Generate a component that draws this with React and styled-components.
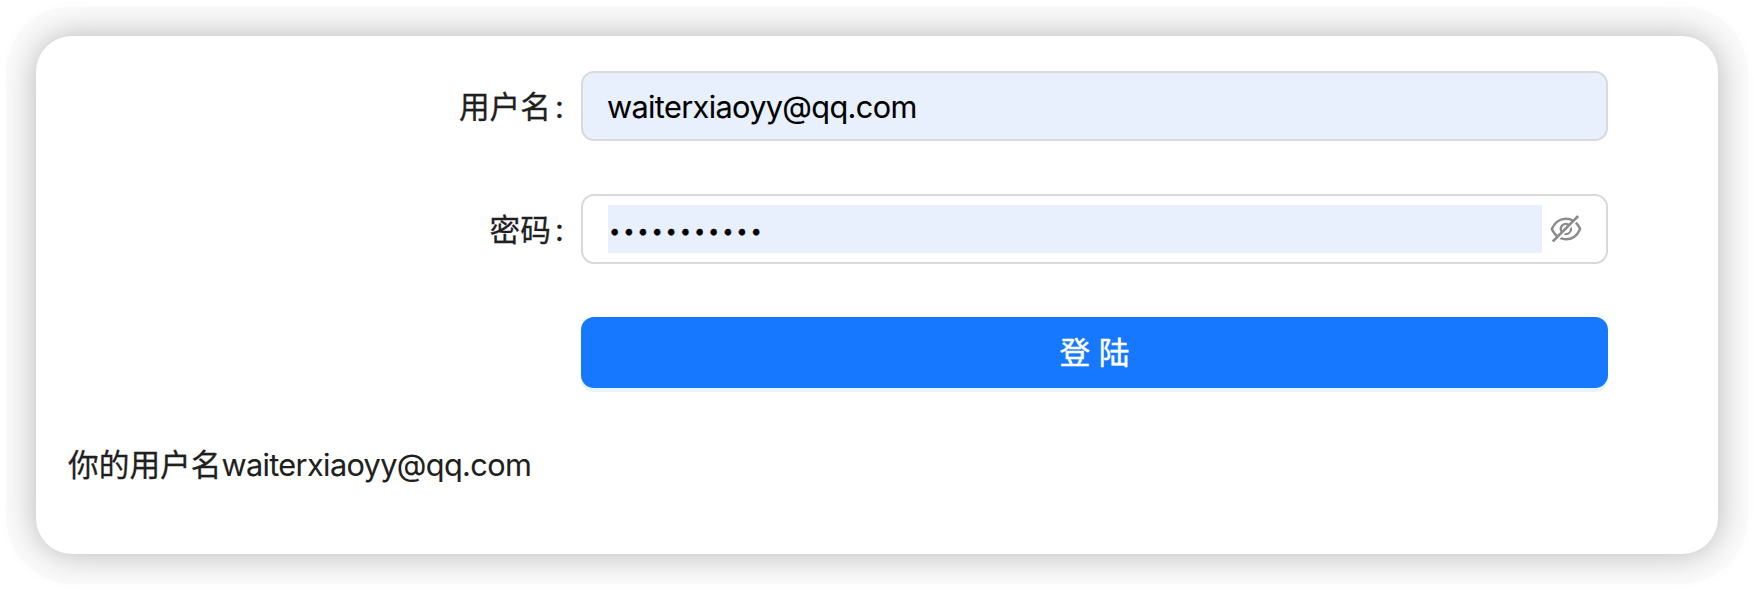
import React from "react";
import styled, { createGlobalStyle } from "styled-components";
import { AiOutlineEyeInvisible } from "react-icons/ai";

const GlobalStyle = createGlobalStyle`
  * { box-sizing: border-box; }
  body {
    margin: 0;
    background: #fff;
    color: #1f1f1f;
    font-family: Inter, "Noto Sans CJK SC", sans-serif;
    font-size: 30.7px;
    line-height: 48px;
    -webkit-text-stroke: 0.3px currentColor;
  }
`;

const Page = styled.main`
  padding: 36px;
  height: 590px;
`;

const Card = styled.section`
  height: 518px;
  padding: 35px 32px;
  border-radius: 36px;
  background: #fff;
  box-shadow: 0 0 34px rgba(0, 0, 0, 0.28), 0 0 0 30px rgba(0, 0, 0, 0.016);
`;

const Form = styled.form`
  display: flex;
  flex-direction: column;
  gap: 53px;
  padding-right: 78px;
`;

const Row = styled.div`
  display: grid;
  grid-template-columns: 513px 1fr;
  align-items: center;
`;

const Label = styled.label`
  display: flex;
  justify-content: flex-end;
  padding: 1px 18px 0 0;
`;

const Colon = styled.span`
  width: 8px;
  margin-left: 4px;
  text-align: center;
`;

const Field = styled.div`
  display: flex;
  align-items: center;
  height: 70px;
  padding: ${(p) => (p.$filled ? "1px 24px 0" : "0 22px 0 25px")};
  border: 2px solid #d9d9d9;
  border-radius: 13px;
  background: ${(p) => (p.$filled ? "#e8f0fe" : "#fff")};
  color: #000;
`;

const Email = styled.span`
  letter-spacing: -0.65px;
  -webkit-text-stroke-width: 0.1px;
`;

const Secret = styled.div`
  flex: 1;
  height: 48px;
  padding-left: 1px;
  margin-right: 6px;
  background: #e8f0fe;
  font-size: 20px;
  line-height: 53px;
  letter-spacing: 2.9px;
`;

const EyeIcon = styled(AiOutlineEyeInvisible)`
  width: 36px;
  height: 36px;
  color: #8c8c8c;
`;

const Submit = styled.button`
  grid-column: 2;
  height: 71px;
  border: 0;
  border-radius: 13px;
  background: #1677ff;
  box-shadow: 0 4px 0 rgba(5, 145, 255, 0.1);
  color: #fff;
  font: inherit;
  -webkit-text-stroke: 0.5px #fff;
`;

const Message = styled.p`
  margin: 53px 0 0;
`;

export default function App() {
  return (
    <>
      <GlobalStyle />
      <Page>
        <Card>
          <Form>
            <Row>
              <Label>用户名<Colon>:</Colon></Label>
              <Field $filled><Email>waiterxiaoyy@qq.com</Email></Field>
            </Row>
            <Row>
              <Label>密码<Colon>:</Colon></Label>
              <Field><Secret>•••••••••••</Secret><EyeIcon /></Field>
            </Row>
            <Row>
              <Submit type="button">登 陆</Submit>
            </Row>
          </Form>
          <Message>你的用户名<Email>waiterxiaoyy@qq.com</Email></Message>
        </Card>
      </Page>
    </>
  );
}
